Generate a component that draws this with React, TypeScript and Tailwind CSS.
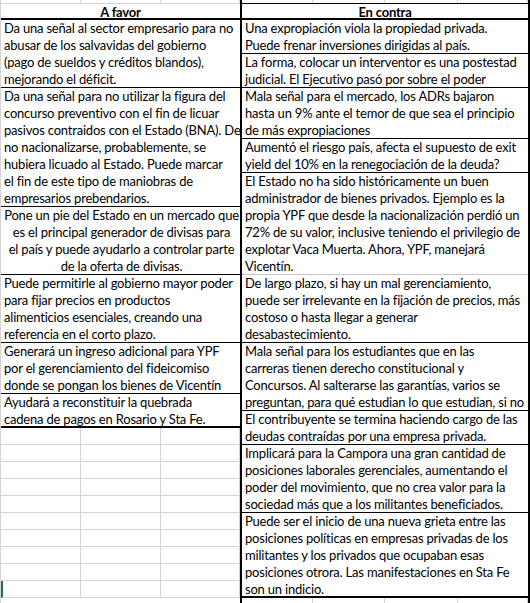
import clsx from 'clsx';

type Row = { lines: string[]; center?: boolean; border?: string };

const heights: Record<number, string> = {
  1: 'h-[17px]',
  2: 'h-[34px]',
  3: 'h-[51px]',
  4: 'h-[68px]',
  5: 'h-[85px]',
  6: 'h-[102px]',
  7: 'h-[119px]',
};

const aFavor: Row[] = [
  {
    lines: [
      'Da una señal al sector empresario para no',
      'abusar de los salvavidas del gobierno',
      '(pago de sueldos y créditos blandos),',
      'mejorando el déficit.',
    ],
  },
  {
    lines: [
      'Da una señal para no utilizar la figura del',
      'concurso preventivo con el fin de licuar',
      'pasivos contraidos con el Estado (BNA). De',
      'no nacionalizarse, probablemente, se',
      'hubiera licuado al Estado. Puede marcar',
      'el fin de este tipo de maniobras de',
      'empresarios prebendarios.',
    ],
  },
  {
    center: true,
    lines: [
      'Pone un pie del Estado en un mercado que',
      'es el principal generador de divisas para',
      'el país y puede ayudarlo a controlar parte',
      'de la oferta de divisas.',
    ],
  },
  {
    lines: [
      'Puede permitirle al gobierno mayor poder',
      'para fijar precios en productos',
      'alimenticios esenciales, creando una',
      'referencia en el corto plazo.',
    ],
  },
  {
    lines: [
      'Generará un ingreso adicional para YPF',
      'por el gerenciamiento del fideicomiso',
      'donde se pongan los bienes de Vicentín',
    ],
  },
  {
    border: 'border-b-2 border-black',
    lines: ['Ayudará a reconstituir la quebrada', 'cadena de pagos en Rosario y Sta Fe.'],
  },
];

const enContra: Row[] = [
  {
    lines: ['Una expropiación viola la propiedad privada.', 'Puede frenar inversiones dirigidas al país.'],
  },
  {
    lines: [
      'La forma, colocar un interventor es una postestad',
      'judicial. El Ejecutivo pasó por sobre el poder',
    ],
  },
  {
    lines: [
      'Mala señal para el mercado, los ADRs bajaron',
      'hasta un 9% ante el temor de que sea el principio',
      'de más expropiaciones',
    ],
  },
  {
    lines: [
      'Aumentó el riesgo país, afecta el supuesto de exit',
      'yield del 10% en la renegociación de la deuda?',
    ],
  },
  {
    border: 'border-b border-[#c6c6c6]',
    lines: [
      'El Estado no ha sido históricamente un buen',
      'administrador de bienes privados. Ejemplo es la',
      'propia YPF que desde la nacionalización perdió un',
      '72% de su valor, inclusive teniendo el privilegio de',
      'explotar Vaca Muerta. Ahora, YPF, manejará',
      'Vicentín.',
    ],
  },
  {
    lines: [
      'De largo plazo, si hay un mal gerenciamiento,',
      'puede ser irrelevante en la fijación de precios, más',
      'costoso o hasta llegar a generar',
      'desabastecimiento.',
    ],
  },
  {
    lines: [
      'Mala señal para los estudiantes que en las',
      'carreras tienen derecho constitucional y',
      'Concursos. Al salterarse las garantías, varios se',
      'preguntan, para qué estudian lo que estudian, si no',
    ],
  },
  {
    lines: [
      'El contribuyente se termina haciendo cargo de las',
      'deudas contraídas por una empresa privada.',
    ],
  },
  {
    lines: [
      'Implicará para la Campora una gran cantidad de',
      'posiciones laborales gerenciales, aumentando el',
      'poder del movimiento, que no crea valor para la',
      'sociedad más que a los militantes beneficiados.',
    ],
  },
  {
    border: 'border-b-2 border-black',
    lines: [
      'Puede ser el inicio de una nueva grieta entre las',
      'posiciones políticas en empresas privadas de los',
      'militantes y los privados que ocupaban esas',
      'posiciones otrora. Las manifestaciones en Sta Fe',
      'son un indicio.',
    ],
  },
];

function Cell({ row }: { row: Row }) {
  return (
    <div
      className={clsx(
        'shrink-0 overflow-hidden pl-[3px] pr-px',
        heights[row.lines.length],
        row.border ?? 'border-b border-black',
        row.center && 'text-center'
      )}
    >
      {row.lines.map((l) => (
        <div key={l} className="h-[17px] whitespace-nowrap leading-[16px]">
          {l}
        </div>
      ))}
    </div>
  );
}

function GridRow({ widths, last }: { widths: string[]; last?: boolean }) {
  return (
    <div className="flex h-[17px] shrink-0">
      {widths.map((w, i) => (
        <div
          key={i}
          className={clsx(
            'h-full border-b border-r border-[#d4d4d4]',
            w,
            last && i === 0 && 'border-l-2 border-l-[#217346]'
          )}
        />
      ))}
    </div>
  );
}

const leftCols = ['w-[80px]', 'w-[80px]', 'w-[79px]'];
const rightCols = ['w-[71px]', 'w-[72px]', 'w-[73px]', 'w-[70px]'];

export default function App() {
  return (
    <div
      className="flex h-[603px] w-[531px] overflow-hidden bg-white text-[13px] tracking-[-0.2px] text-black"
      style={{ fontFamily: 'Lato, "Open Sans", sans-serif' }}
    >
      {/* A favor */}
      <div className="flex w-[240px] shrink-0 flex-col border-l border-[#d4d4d4]">
        <div className="flex h-[3px] shrink-0">
          {leftCols.map((w, i) => (
            <div key={i} className={clsx('h-full border-r border-[#d4d4d4]', w)} />
          ))}
        </div>
        <div className="h-[17px] shrink-0 border-t border-b-2 border-t-[#d4d4d4] border-b-black pt-px text-center font-bold leading-[14px]">
          A favor
        </div>
        {aFavor.map((r, i) => (
          <Cell key={i} row={r} />
        ))}
        {Array.from({ length: 10 }).map((_, i) => (
          <GridRow key={i} widths={leftCols} last={i === 9} />
        ))}
      </div>

      <div className="w-[2px] shrink-0 bg-black" />

      {/* En contra */}
      <div className="flex w-[286px] shrink-0 flex-col">
        <div className="flex h-[3px] shrink-0">
          {rightCols.map((w, i) => (
            <div key={i} className={clsx('h-full border-r border-[#d4d4d4]', w)} />
          ))}
        </div>
        <div className="h-[17px] shrink-0 border-t border-b-2 border-black pt-px text-center font-bold leading-[14px]">
          En contra
        </div>
        {enContra.map((r, i) => (
          <Cell key={i} row={r} />
        ))}
        <GridRow widths={rightCols} />
      </div>

      <div className="w-[2px] shrink-0 bg-black" />
      <div className="w-px shrink-0 bg-white" />
    </div>
  );
}
